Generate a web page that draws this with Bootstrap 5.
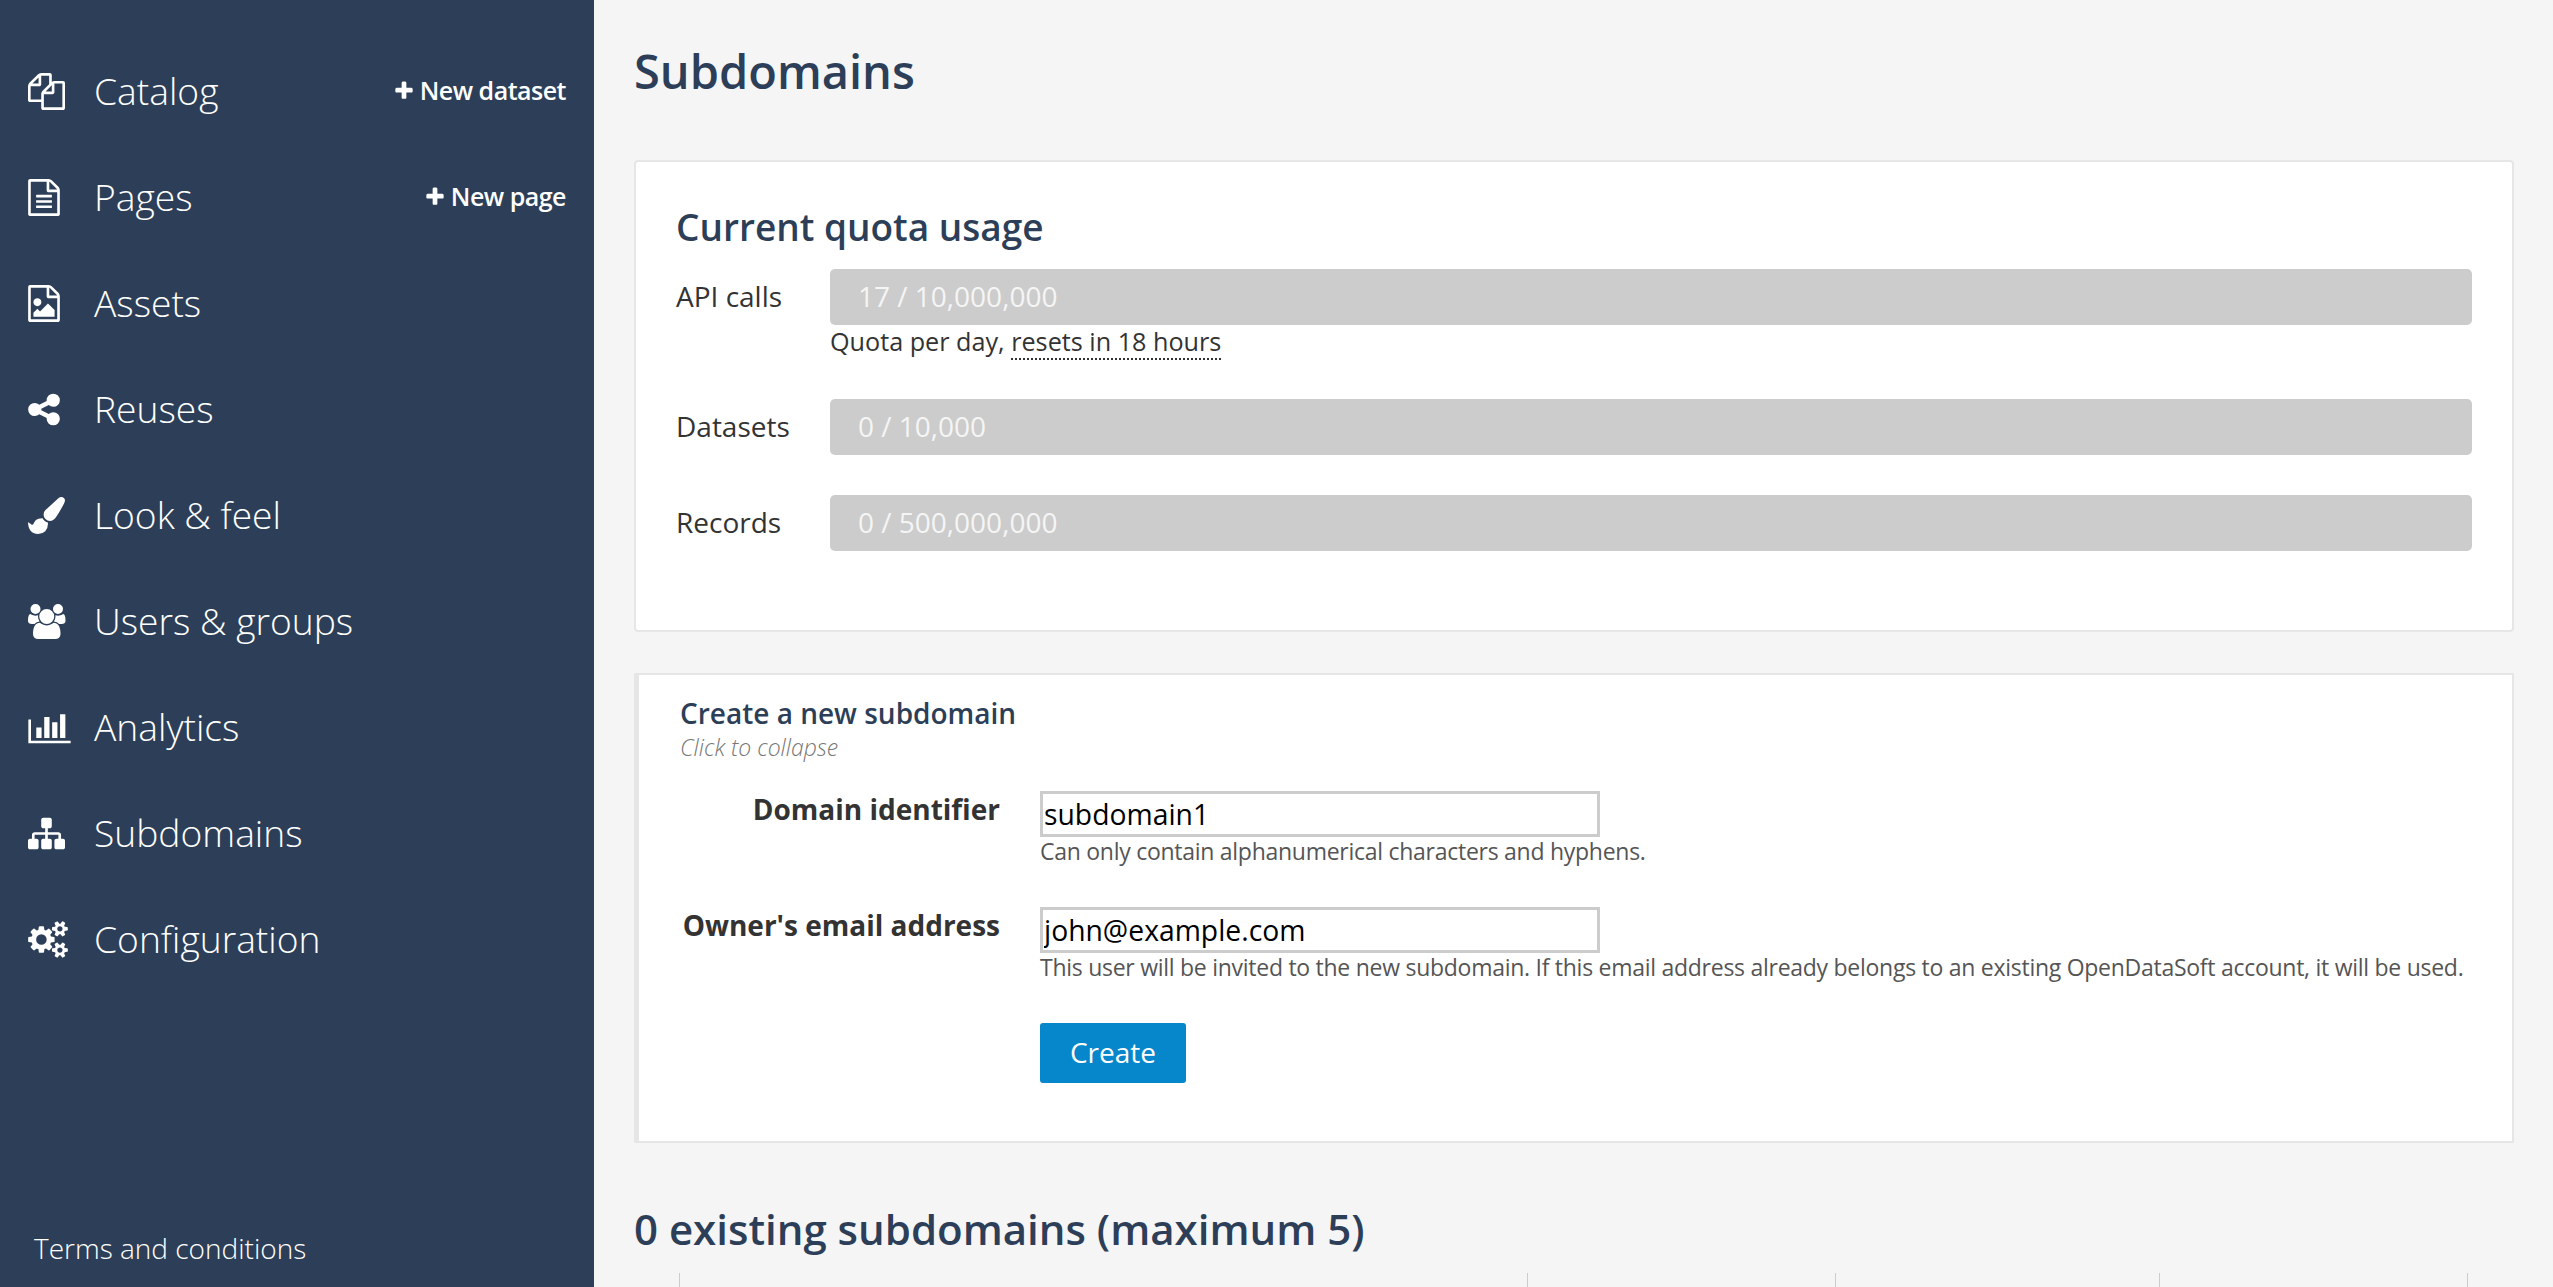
<!DOCTYPE html>
<html lang="en">
<head>
  <meta charset="UTF-8" />
  <meta name="viewport" content="width=device-width, initial-scale=1.0"/>
  <title>Subdomains</title>
  <link href="https://cdn.jsdelivr.net/npm/bootstrap@5.3.3/dist/css/bootstrap.min.css" rel="stylesheet"/>
  <style>
    html, body { height: 100%; overflow: hidden; }
    body { background: #f5f5f5; color: #333; font-family: "Open Sans", "Liberation Sans", sans-serif; }
    .side-panel { width: 594px; height: 1287px; background: #2d3f58; padding-top: 38px; padding-bottom: 19px; color: #fff; flex: none; }
    .side-row { height: 106px; padding-left: 28px; padding-right: 28px; }
    .side-ico { width: 66px; flex: none; display: flex; }
    .side-ico svg { height: 37px; fill: #fff; display: block; }
    .side-link { color: #fff; font-size: 37.2px; font-weight: 300; text-decoration: none; line-height: 50px; }
    .side-add { color: #fff; font-size: 25px; font-weight: 600; text-decoration: none; letter-spacing: -0.5px; }
    .side-add svg { height: 22px; width: 22px; fill: #fff; vertical-align: -2px; margin-right: 5px; }
    .side-terms { color: #fff; font-size: 28px; font-weight: 300; text-decoration: none; padding-left: 34px; line-height: 40px; }
    .main-area { flex: 1; padding: 0 39px 0 40px; min-width: 0; }
    .page-title { font-size: 47px; font-weight: 600; color: #2d3f58; line-height: 60px; margin: 41px 0 59px; }
    .quota-card { border: 2px solid #e6e6e6; border-radius: 4px; padding: 40px 40px 79px 40px; background: #fff; }
    .quota-title { font-size: 37px; font-weight: 600; color: #2d3f58; line-height: 50px; margin-bottom: 17px; }
    .quota-label { width: 154px; flex: none; font-size: 28px; line-height: 54px; color: #333; }
    .quota-bar { height: 56px; background: #ccc; border-radius: 5px; padding-left: 28px; color: #f5f5f5; font-size: 28px; line-height: 54px; }
    .quota-note { margin-left: 154px; font-size: 25.2px; line-height: 33px; color: #333; margin-bottom: 41px; }
    .quota-note span { border-bottom: 2px dotted #333; }
    .quota-gap { margin-bottom: 40px; }
    .create-card { border: 2px solid #e6e6e6; border-left-width: 5px; padding: 18px 0 58px 41px; margin-top: 41px; background: #fff; }
    .create-title { font-size: 28px; font-weight: 600; color: #2d3f58; line-height: 40px; }
    .create-hint { font-size: 23px; font-style: italic; font-weight: 300; color: #777; line-height: 28px; margin-bottom: 30px; }
    .field-label { width: 361px; margin-left: -41px; margin-right: 40px; flex: none; text-align: right; font-size: 28px; font-weight: 700; line-height: 37px; color: #333; }
    .field-input { width: 560px; height: 46px; border: 3px solid #ccc; border-radius: 0; padding: 0 1px; font-size: 28.3px; color: #000; font-family: "Open Sans", sans-serif; line-height: 40px; background: #fff; }
    .field-help { font-size: 23px; letter-spacing: -0.27px; line-height: 29px; color: #555; margin-bottom: 41px; white-space: nowrap; }
    .create-btn { width: 146px; height: 60px; background: #0686cb; border: 0; border-radius: 3px; color: #fff; font-size: 28px; padding: 0 0 2px; }
    .list-title { font-size: 42px; font-weight: 600; color: #2d3f58; line-height: 54px; margin: 59px 0 17px; }
    .sub-grid { table-layout: fixed; width: 100%; border-collapse: collapse; }
    .sub-grid th { height: 60px; border-left: 1px solid #ccc; padding: 0; }
    .sub-grid th:first-child { border-left: 0; }
  </style>
</head>
<body>
  <div class="d-flex">
    <nav class="side-panel d-flex flex-column">
      <div class="side-row d-flex align-items-center justify-content-between">
        <a class="side-link d-flex align-items-center" href="#"><span class="side-ico"><svg viewBox="0 0 1792 1792" width="37"><path d="M1696 384q40 0 68 28t28 68v1216q0 40-28 68t-68 28h-960q-40 0-68-28t-28-68v-288h-544q-40 0-68-28t-28-68v-672q0-40 20-88t48-76l408-408q28-28 76-48t88-20h416q40 0 68 28t28 68v328q68-40 128-40h416zm-544 213l-299 299h299v-299zm-640-384l-299 299h299v-299zm196 647l316-316v-416h-384v416q0 40-28 68t-68 28h-416v640h512v-256q0-40 20-88t48-76zm956 804v-1152h-384v416q0 40-28 68t-68 28h-416v640h896z"/></svg></span>Catalog</a>
        <a class="side-add" href="#"><svg viewBox="0 0 1792 1792"><path d="M1600 736v192q0 40-28 68t-68 28h-416v416q0 40-28 68t-68 28h-192q-40 0-68-28t-28-68v-416h-416q-40 0-68-28t-28-68v-192q0-40 28-68t68-28h416v-416q0-40 28-68t68-28h192q40 0 68 28t28 68v416h416q40 0 68 28t28 68z"/></svg>New dataset</a>
      </div>
      <div class="side-row d-flex align-items-center justify-content-between">
        <a class="side-link d-flex align-items-center" href="#"><span class="side-ico"><svg viewBox="128 0 1536 1792" width="32"><path d="M1596 380q28 28 48 76t20 88v1152q0 40-28 68t-68 28h-1344q-40 0-68-28t-28-68v-1600q0-40 28-68t68-28h896q40 0 88 20t76 48zm-444-244v376h376q-10-29-22-41l-313-313q-12-12-41-22zm384 1528v-1024h-416q-40 0-68-28t-28-68v-416h-768v1536h1280zm-1024-864q0-14 9-23t23-9h704q14 0 23 9t9 23v64q0 14-9 23t-23 9h-704q-14 0-23-9t-9-23v-64zm736 224q14 0 23 9t9 23v64q0 14-9 23t-23 9h-704q-14 0-23-9t-9-23v-64q0-14 9-23t23-9h704zm0 256q14 0 23 9t9 23v64q0 14-9 23t-23 9h-704q-14 0-23-9t-9-23v-64q0-14 9-23t23-9h704z"/></svg></span>Pages</a>
        <a class="side-add" href="#"><svg viewBox="0 0 1792 1792"><path d="M1600 736v192q0 40-28 68t-68 28h-416v416q0 40-28 68t-68 28h-192q-40 0-68-28t-28-68v-416h-416q-40 0-68-28t-28-68v-192q0-40 28-68t68-28h416v-416q0-40 28-68t68-28h192q40 0 68 28t28 68v416h416q40 0 68 28t28 68z"/></svg>New page</a>
      </div>
      <div class="side-row d-flex align-items-center">
        <a class="side-link d-flex align-items-center" href="#"><span class="side-ico"><svg viewBox="128 0 1536 1792" width="32"><path d="M1596 380q28 28 48 76t20 88v1152q0 40-28 68t-68 28h-1344q-40 0-68-28t-28-68v-1600q0-40 28-68t68-28h896q40 0 88 20t76 48zm-444-244v376h376q-10-29-22-41l-313-313q-12-12-41-22zm384 1528v-1024h-416q-40 0-68-28t-28-68v-416h-768v1536h1280zm-128-448v320h-1024v-192l192-192 128 128 384-384zm-832-192q-80 0-136-56t-56-136 56-136 136-56 136 56 56 136-56 136-136 56z"/></svg></span>Assets</a>
      </div>
      <div class="side-row d-flex align-items-center">
        <a class="side-link d-flex align-items-center" href="#"><span class="side-ico"><svg viewBox="128 0 1536 1792" width="32"><path d="M1344 1024q133 0 226.5 93.5t93.5 226.5-93.5 226.5-226.5 93.5-226.5-93.5-93.5-226.5q0-12 2-34l-360-180q-92 86-218 86-133 0-226.5-93.5t-93.5-226.5 93.5-226.5 226.5-93.5q126 0 218 86l360-180q-2-22-2-34 0-133 93.5-226.5t226.5-93.5 226.5 93.5 93.5 226.5-93.5 226.5-226.5 93.5q-126 0-218-86l-360 180q2 22 2 34t-2 34l360 180q92-86 218-86z"/></svg></span>Reuses</a>
      </div>
      <div class="side-row d-flex align-items-center">
        <a class="side-link d-flex align-items-center" href="#"><span class="side-ico"><svg viewBox="0 0 1792 1792" width="37"><path d="M1615 0q70 0 122.5 46.5t52.5 116.5q0 63-45 151-332 629-465 752-97 91-218 91-126 0-216.5-92.5t-90.5-219.5q0-128 92-212l638-579q59-54 130-54zm-909 1034q39 76 106.5 130t150.5 76l1 71q4 213-129.5 347t-348.5 134q-123 0-218-46.5t-152.5-127.5-86.5-183-29-220q7 5 41 30t62 44.5 59 36.5 46 17q41 0 55-37 25-66 57.5-112.5t69.5-76 88-47.5 103-25.5 125-10.5z"/></svg></span>Look &amp; feel</a>
      </div>
      <div class="side-row d-flex align-items-center">
        <a class="side-link d-flex align-items-center" href="#"><span class="side-ico"><svg viewBox="-64 0 2048 1792" width="40"><path d="M529 896q-162 5-265 128h-134q-82 0-138-40.5t-56-118.5q0-353 124-353 6 0 43.5 21t97.5 42.5 119 21.5q67 0 133-23-5 37-5 66 0 139 81 256zm1071 637q0 120-73 189.5t-194 69.5h-874q-121 0-194-69.5t-73-189.5q0-53 3.5-103.5t14-109 26.5-108.5 43-97.5 62-81 85.5-53.5 111.5-20q10 0 43 21.5t73 48 107 48 135 21.5 135-21.5 107-48 73-48 43-21.5q61 0 111.5 20t85.5 53.5 62 81 43 97.5 26.5 108.5 14 109 3.5 103.5zm-1024-1277q0 106-75 181t-181 75-181-75-75-181 75-181 181-75 181 75 75 181zm704 384q0 159-112.5 271.5t-271.5 112.5-271.5-112.5-112.5-271.5 112.5-271.5 271.5-112.5 271.5 112.5 112.5 271.5zm576 225q0 78-56 118.5t-138 40.5h-134q-103-123-265-128 81-117 81-256 0-29-5-66 66 23 133 23 59 0 119-21.5t97.5-42.5 43.5-21q124 0 124 353zm-128-609q0 106-75 181t-181 75-181-75-75-181 75-181 181-75 181 75 75 181z"/></svg></span>Users &amp; groups</a>
      </div>
      <div class="side-row d-flex align-items-center">
        <a class="side-link d-flex align-items-center" href="#"><span class="side-ico"><svg viewBox="0 0 2048 1792" width="43"><path d="M640 896v512h-256v-512h256zm384-512v1024h-256v-1024h256zm1024 1152v128h-2048v-1152h128v1024h1920zm-640-896v768h-256v-768h256zm384-384v1152h-256v-1152h256z"/></svg></span>Analytics</a>
      </div>
      <div class="side-row d-flex align-items-center">
        <a class="side-link d-flex align-items-center" href="#"><span class="side-ico"><svg viewBox="0 0 1792 1792" width="37"><path d="M1792 1248v320q0 40-28 68t-68 28h-320q-40 0-68-28t-28-68v-320q0-40 28-68t68-28h96v-192h-512v192h96q40 0 68 28t28 68v320q0 40-28 68t-68 28h-320q-40 0-68-28t-28-68v-320q0-40 28-68t68-28h96v-192h-512v192h96q40 0 68 28t28 68v320q0 40-28 68t-68 28h-320q-40 0-68-28t-28-68v-320q0-40 28-68t68-28h96v-192q0-52 38-90t90-38h512v-192h-96q-40 0-68-28t-28-68v-320q0-40 28-68t68-28h320q40 0 68 28t28 68v320q0 40-28 68t-68 28h-96v192h512q52 0 90 38t38 90v192h96q40 0 68 28t28 68z"/></svg></span>Subdomains</a>
      </div>
      <div class="side-row d-flex align-items-center">
        <a class="side-link d-flex align-items-center" href="#"><span class="side-ico"><svg viewBox="0 0 1920 1792" width="40"><path d="M896 896q0-106-75-181t-181-75-181 75-75 181 75 181 181 75 181-75 75-181zm768 512q0-52-38-90t-90-38-90 38-38 90q0 53 37.5 90.5t90.5 37.5 90.5-37.5 37.5-90.5zm0-1024q0-52-38-90t-90-38-90 38-38 90q0 53 37.5 90.5t90.5 37.5 90.5-37.5 37.5-90.5zm-384 421v185q0 10-7 19.5t-16 10.5l-155 24q-11 35-32 76 34 48 90 115 7 11 7 20 0 12-7 19-23 30-82.5 89.5t-78.5 59.5q-11 0-21-7l-115-90q-37 19-77 31-11 108-23 155-7 24-30 24h-186q-11 0-20-7.5t-10-17.5l-23-153q-34-10-75-31l-118 89q-7 7-20 7-11 0-21-8-144-133-144-160 0-9 7-19 10-14 41-53t47-61q-23-44-35-82l-152-24q-10-1-17-9.5t-7-19.5v-185q0-10 7-19.5t16-10.5l155-24q11-35 32-76-34-48-90-115-7-11-7-20 0-12 7-20 22-30 82-89t79-59q11 0 21 7l115 90q34-18 77-32 11-108 23-154 7-24 30-24h186q11 0 20 7.5t10 17.5l23 153q34 10 75 31l118-89q8-7 20-7 11 0 21 8 144 133 144 160 0 8-7 19-12 16-42 54t-45 60q23 48 34 82l152 23q10 2 17 10.5t7 19.5zm640 533v140q0 16-149 31-12 27-30 52 51 113 51 138 0 4-4 7-122 71-124 71-8 0-46-47t-52-68q-20 2-30 2t-30-2q-14 21-52 68t-46 47q-2 0-124-71-4-3-4-7 0-25 51-138-18-25-30-52-149-15-149-31v-140q0-16 149-31 13-29 30-52-51-113-51-138 0-4 4-7 4-2 35-20t59-34 30-16q8 0 46 46.5t52 67.5q20-2 30-2t30 2q51-71 92-112l6-2q4 0 124 70 4 3 4 7 0 25-51 138 17 23 30 52 149 15 149 31zm0-1024v140q0 16-149 31-12 27-30 52 51 113 51 138 0 4-4 7-122 71-124 71-8 0-46-47t-52-68q-20 2-30 2t-30-2q-14 21-52 68t-46 47q-2 0-124-71-4-3-4-7 0-25 51-138-18-25-30-52-149-15-149-31v-140q0-16 149-31 13-29 30-52-51-113-51-138 0-4 4-7 4-2 35-20t59-34 30-16q8 0 46 46.5t52 67.5q20-2 30-2t30 2q51-71 92-112l6-2q4 0 124 70 4 3 4 7 0 25-51 138 17 23 30 52 149 15 149 31z"/></svg></span>Configuration</a>
      </div>
      <a class="side-terms mt-auto" href="#">Terms and conditions</a>
    </nav>

    <main class="main-area">
      <h1 class="page-title">Subdomains</h1>

      <section class="quota-card">
        <h2 class="quota-title">Current quota usage</h2>
        <div class="d-flex">
          <div class="quota-label">API calls</div>
          <div class="quota-bar flex-grow-1">17 / 10,000,000</div>
        </div>
        <div class="quota-note">Quota per day, <span>resets in 18 hours</span></div>
        <div class="d-flex quota-gap">
          <div class="quota-label">Datasets</div>
          <div class="quota-bar flex-grow-1">0 / 10,000</div>
        </div>
        <div class="d-flex">
          <div class="quota-label">Records</div>
          <div class="quota-bar flex-grow-1">0 / 500,000,000</div>
        </div>
      </section>

      <section class="create-card">
        <h3 class="create-title m-0">Create a new subdomain</h3>
        <div class="create-hint">Click to collapse</div>
        <form>
          <div class="d-flex">
            <label class="field-label" for="domain-id">Domain identifier</label>
            <div>
              <input class="field-input d-block" id="domain-id" type="text" value="subdomain1"/>
              <div class="field-help">Can only contain alphanumerical characters and hyphens.</div>
            </div>
          </div>
          <div class="d-flex">
            <label class="field-label" for="owner-mail">Owner's email address</label>
            <div>
              <input class="field-input d-block" id="owner-mail" type="text" value="john@example.com"/>
              <div class="field-help">This user will be invited to the new subdomain. If this email address already belongs to an existing OpenDataSoft account, it will be used.</div>
              <button class="btn btn-primary create-btn" type="button">Create</button>
            </div>
          </div>
        </form>
      </section>

      <h2 class="list-title">0 existing subdomains (maximum 5)</h2>
      <table class="sub-grid">
        <colgroup><col style="width:45px"/><col style="width:848px"/><col style="width:308px"/><col style="width:324px"/><col style="width:308px"/><col/></colgroup>
        <thead><tr><th></th><th></th><th></th><th></th><th></th><th></th></tr></thead>
      </table>
    </main>
  </div>
  <script src="https://cdn.jsdelivr.net/npm/bootstrap@5.3.3/dist/js/bootstrap.bundle.min.js"></script>
</body>
</html>
